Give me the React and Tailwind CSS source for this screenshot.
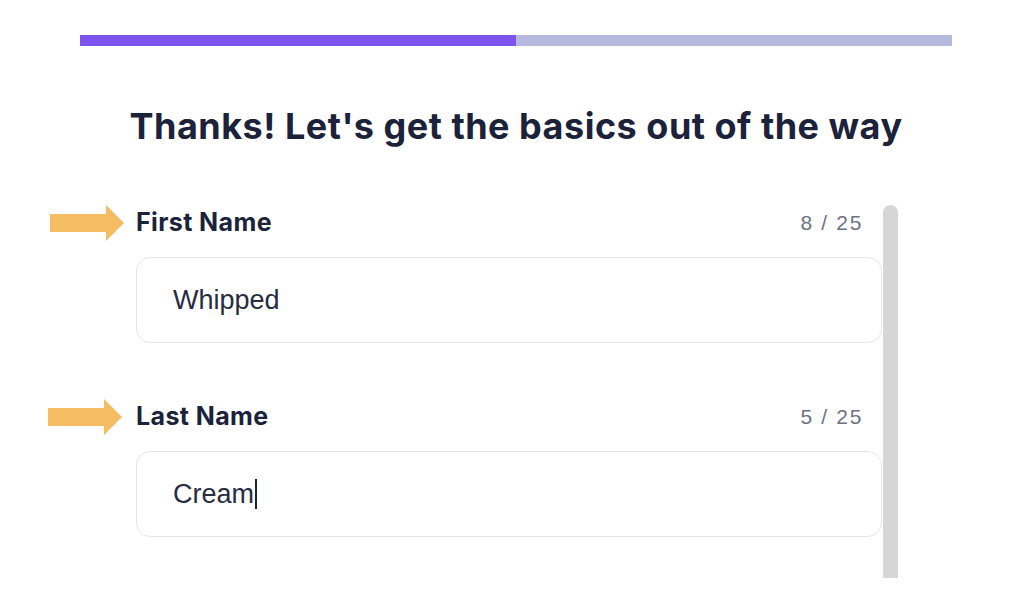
const Arrow = ({ className }) => (
    <svg className={className} width="74" height="36" viewBox="0 0 74 36">
        <path d="M0 9 H56 V0 L74 18 L56 36 V27 H0 Z" fill="#f4bd63" />
    </svg>
)

const Field = ({ label, value, count, arrowClass, caret }) => (
    <div className="flex flex-col">
        <div className="flex items-center h-[36px]">
            <div className="w-[88px] shrink-0 flex">
                <Arrow className={arrowClass} />
            </div>
            <span className="text-[25px] font-bold text-[#1b2239] tracking-[0.4px] font-['Inter',sans-serif]">
                {label}
            </span>
            <span className="ml-auto mr-[19px] text-[21px] text-[#6e7182] tracking-[0.08em] font-['Liberation_Sans',Arial,sans-serif]">
                {count}
            </span>
        </div>
        <div className="ml-[88px] mt-[16px] h-[86px] rounded-[14px] border border-[#e6e6e6] flex items-center pl-[36px]">
            <span className="text-[27px] text-[#272c42] font-['Liberation_Sans',Arial,sans-serif]">{value}</span>
            {caret && <span className="w-[2px] h-[30px] bg-[#1b2239] ml-[1px]" />}
        </div>
    </div>
)

export default function App() {
    return (
        <div className="w-[1018px] h-[616px] bg-white overflow-hidden">
            {/* progress */}
            <div className="mt-[35px] ml-[80px] w-[872px] h-[11px] flex bg-[#b6b9de]">
                <div className="w-[436px] bg-[#7c55ee]" />
            </div>

            <h1 className="mt-[60px] pl-[14px] text-center text-[36px] leading-[40px] font-bold text-[#1b2239] font-['Inter',sans-serif] tracking-[0.5px]">
                Thanks! Let's get the basics out of the way
            </h1>

            <div className="mt-[59px] flex">
                <div className="ml-[48px] w-[834px] flex flex-col gap-[56px]">
                    <Field label="First Name" value="Whipped" count="8 / 25" arrowClass="ml-[2px]" />
                    <Field label="Last Name" value="Cream" count="5 / 25" arrowClass="" caret />
                </div>
                <div className="ml-[1px] w-[15px] h-[373px] rounded-t-full bg-[#d6d6d6]" />
            </div>
        </div>
    )
}
